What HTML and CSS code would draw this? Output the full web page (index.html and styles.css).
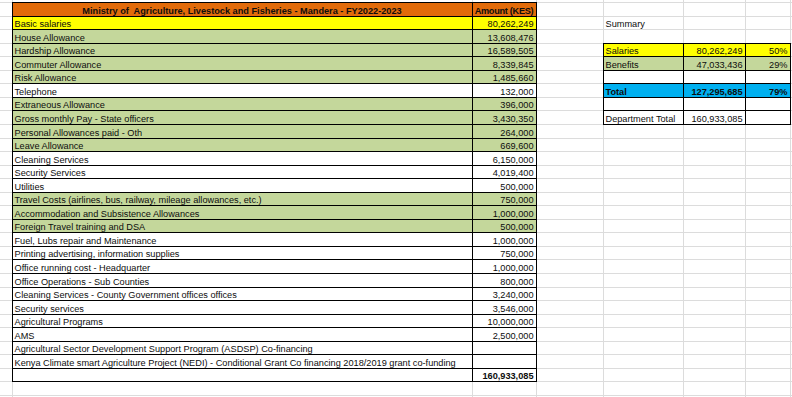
FILE: index.html
```html
<!DOCTYPE html>
<html>
<head>
<meta charset="utf-8">
<title>Ministry of Agriculture - Mandera - FY2022-2023</title>
<link rel="stylesheet" href="styles.css">
</head>
<body>
<table class="sheet">
  <colgroup>
    <col class="w-a"><col class="w-b"><col class="w-c"><col class="w-d"><col class="w-e"><col class="w-f"><col class="w-g"><col class="w-h">
  </colgroup>
  <tr class="spacer"><td></td><td></td><td></td><td></td><td></td><td></td><td></td><td></td></tr>
  <tr>
    <td></td><td class="b orange bold center">Ministry of&nbsp; Agriculture, Livestock and Fisheries - Mandera - FY2022-2023</td><td class="b orange bold center tight">Amount (KES)</td>
    <td></td><td></td><td></td><td></td><td></td>
  </tr>
  <tr>
    <td></td><td class="b yellow">Basic salaries</td><td class="b yellow num">80,262,249</td>
    <td></td><td>Summary</td><td></td><td></td><td></td>
  </tr>
  <tr>
    <td></td><td class="b green">House Allowance</td><td class="b green num">13,608,476</td>
    <td></td><td></td><td></td><td></td><td></td>
  </tr>
  <tr>
    <td></td><td class="b green">Hardship Allowance</td><td class="b green num">16,589,505</td>
    <td></td><td class="b yellow">Salaries</td><td class="b yellow num">80,262,249</td><td class="b yellow num">50%</td><td></td>
  </tr>
  <tr>
    <td></td><td class="b green">Commuter Allowance</td><td class="b green num">8,339,845</td>
    <td></td><td class="b green">Benefits</td><td class="b green num">47,033,436</td><td class="b green num">29%</td><td></td>
  </tr>
  <tr>
    <td></td><td class="b green">Risk Allowance</td><td class="b green num">1,485,660</td>
    <td></td><td class="b"></td><td class="b"></td><td class="b"></td><td></td>
  </tr>
  <tr>
    <td></td><td class="b">Telephone</td><td class="b num">132,000</td>
    <td></td><td class="b blue bold">Total</td><td class="b blue bold num">127,295,685</td><td class="b blue bold num">79%</td><td></td>
  </tr>
  <tr>
    <td></td><td class="b green">Extraneous Allowance</td><td class="b green num">396,000</td>
    <td></td><td class="b"></td><td class="b"></td><td class="b"></td><td></td>
  </tr>
  <tr>
    <td></td><td class="b green">Gross monthly Pay - State officers</td><td class="b green num">3,430,350</td>
    <td></td><td class="b">Department Total</td><td class="b num">160,933,085</td><td class="b"></td><td></td>
  </tr>
  <tr>
    <td></td><td class="b green">Personal Allowances paid - Oth</td><td class="b green num">264,000</td>
    <td></td><td></td><td></td><td></td><td></td>
  </tr>
  <tr>
    <td></td><td class="b green">Leave Allowance</td><td class="b green num">669,600</td>
    <td></td><td></td><td></td><td></td><td></td>
  </tr>
  <tr>
    <td></td><td class="b">Cleaning Services</td><td class="b num">6,150,000</td>
    <td></td><td></td><td></td><td></td><td></td>
  </tr>
  <tr>
    <td></td><td class="b">Security Services</td><td class="b num">4,019,400</td>
    <td></td><td></td><td></td><td></td><td></td>
  </tr>
  <tr>
    <td></td><td class="b">Utilities</td><td class="b num">500,000</td>
    <td></td><td></td><td></td><td></td><td></td>
  </tr>
  <tr>
    <td></td><td class="b green">Travel Costs (airlines, bus, railway, mileage allowances, etc.)</td><td class="b green num">750,000</td>
    <td></td><td></td><td></td><td></td><td></td>
  </tr>
  <tr>
    <td></td><td class="b green">Accommodation and Subsistence Allowances</td><td class="b green num">1,000,000</td>
    <td></td><td></td><td></td><td></td><td></td>
  </tr>
  <tr>
    <td></td><td class="b green">Foreign Travel training and DSA</td><td class="b green num">500,000</td>
    <td></td><td></td><td></td><td></td><td></td>
  </tr>
  <tr>
    <td></td><td class="b">Fuel, Lubs repair and Maintenance</td><td class="b num">1,000,000</td>
    <td></td><td></td><td></td><td></td><td></td>
  </tr>
  <tr>
    <td></td><td class="b">Printing advertising, information supplies</td><td class="b num">750,000</td>
    <td></td><td></td><td></td><td></td><td></td>
  </tr>
  <tr>
    <td></td><td class="b">Office running cost - Headquarter</td><td class="b num">1,000,000</td>
    <td></td><td></td><td></td><td></td><td></td>
  </tr>
  <tr>
    <td></td><td class="b">Office Operations - Sub Counties</td><td class="b num">800,000</td>
    <td></td><td></td><td></td><td></td><td></td>
  </tr>
  <tr>
    <td></td><td class="b">Cleaning Services - County Government offices offices</td><td class="b num">3,240,000</td>
    <td></td><td></td><td></td><td></td><td></td>
  </tr>
  <tr>
    <td></td><td class="b">Security services</td><td class="b num">3,546,000</td>
    <td></td><td></td><td></td><td></td><td></td>
  </tr>
  <tr>
    <td></td><td class="b">Agricultural Programs</td><td class="b num">10,000,000</td>
    <td></td><td></td><td></td><td></td><td></td>
  </tr>
  <tr>
    <td></td><td class="b">AMS</td><td class="b num">2,500,000</td>
    <td></td><td></td><td></td><td></td><td></td>
  </tr>
  <tr>
    <td></td><td class="b">Agricultural Sector Development Support Program (ASDSP) Co-financing</td><td class="b num"></td>
    <td></td><td></td><td></td><td></td><td></td>
  </tr>
  <tr>
    <td></td><td class="b">Kenya Climate smart Agriculture Project (NEDI) - Conditional Grant Co financing 2018/2019 grant co-funding</td><td class="b num"></td>
    <td></td><td></td><td></td><td></td><td></td>
  </tr>
  <tr>
    <td></td><td class="b"></td><td class="b num bold">160,933,085</td>
    <td></td><td></td><td></td><td></td><td></td>
  </tr>
  <tr>
    <td></td><td></td><td></td><td></td><td></td><td></td><td></td><td></td>
  </tr>
  <tr>
    <td></td><td></td><td></td><td></td><td></td><td></td><td></td><td></td>
  </tr>
</table>
</body>
</html>
```

FILE: styles.css
```css
html, body {
  margin: 0;
  padding: 0;
  background: #ffffff;
  overflow: hidden;
}

body {
  font-family: "Liberation Sans", Arial, sans-serif;
  font-size: 9.2px;
  color: #0d0d0d;
}

.sheet {
  border-collapse: collapse;
  table-layout: fixed;
  width: 792px;
  border-top: hidden;
  border-left: hidden;
  border-right: hidden;
}

.w-a { width: 12px; }
.w-b { width: 460px; }
.w-c { width: 64px; }
.w-d { width: 67px; }
.w-e { width: 80px; }
.w-f { width: 62px; }
.w-g { width: 45px; }
.w-h { width: 2px; }

.sheet tr {
  height: 13.55px;
}

.sheet tr.spacer {
  height: 2.6px;
}

.sheet td {
  border: 1px solid #dcdcdc;
  padding: 0 2px 0 2px;
  white-space: nowrap;
  overflow: hidden;
  vertical-align: bottom;
  line-height: 9px;
}

.sheet tr.spacer td {
  line-height: 0;
  padding: 0;
}

.sheet td.b {
  border: 1px double #000000;
}

.sheet td.tight {
  padding: 0;
  letter-spacing: -0.3px;
}

.num { text-align: right; }
.center { text-align: center; }
.bold { font-weight: bold; }

.orange { background: #e26b0a; }
.yellow { background: #ffff00; }
.green { background: #c4d79b; }
.blue { background: #00b0f0; }
```
